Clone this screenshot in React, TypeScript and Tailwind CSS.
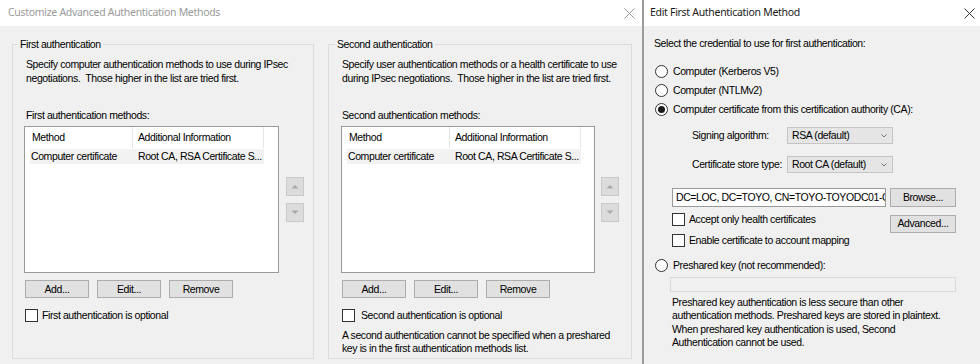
import React from "react";

const T = "font-['Liberation_Sans',Arial,sans-serif] text-[10.5px] tracking-[-0.4px] text-black";

function CloseX({ color }: { color: string }) {
  return (
    <svg width="11" height="11" viewBox="0 0 11 11" className="block">
      <path d="M0.5 0.5 L10.5 10.5 M10.5 0.5 L0.5 10.5" stroke={color} strokeWidth="1" fill="none" />
    </svg>
  );
}

function Btn({ children, className = "" }: { children: React.ReactNode; className?: string }) {
  return (
    <div
      className={`flex h-[18px] w-[64px] items-center justify-center border border-[#adadad] bg-[#e1e1e1] leading-none ${className}`}
    >
      {children}
    </div>
  );
}

function Check({ label, gap = "gap-[5px]" }: { label: string; gap?: string }) {
  return (
    <div className={`flex h-[15px] items-center ${gap}`}>
      <div className="h-[13px] w-[13px] border border-[#333333] bg-white" />
      <span className="leading-none">{label}</span>
    </div>
  );
}

function Radio({ label, checked = false }: { label: string; checked?: boolean }) {
  return (
    <div className="flex h-[19px] items-center gap-[5px]">
      <div className="flex h-[13px] w-[13px] items-center justify-center rounded-full border border-[#333333] bg-white">
        {checked && <div className="h-[7px] w-[7px] rounded-full bg-[#1a1a1a]" />}
      </div>
      <span className="leading-none">{label}</span>
    </div>
  );
}

function ArrowBtn({ up }: { up: boolean }) {
  return (
    <div className="flex h-[19px] w-[18px] items-center justify-center border border-[#c9c9c9] bg-[#dcdcdc]">
      <svg width="8" height="5" viewBox="0 0 8 5">
        {up ? <path d="M0.5 4.5 L4 1 L7.5 4.5 Z" fill="#a9a9a9" /> : <path d="M0.5 0.5 L4 4 L7.5 0.5 Z" fill="#a9a9a9" />}
      </svg>
    </div>
  );
}

function MethodList({ w }: { w: string }) {
  return (
    <div className={`h-[147px] ${w} border border-[#9a9a9a] bg-white pl-[5px]`}>
      <div className="flex h-[21px] w-[234px] items-center">
        <div className="flex h-full w-[103px] items-center border-r border-[#e5e5e5] pl-[2px]">Method</div>
        <div className="flex h-full w-[131px] items-center border-r border-[#e5e5e5] pl-[5px]">Additional Information</div>
      </div>
      <div className="mt-[1px] flex h-[15px] w-[234px] items-center bg-[#f2f2f2]">
        <div className="w-[103px] pl-[1px]">Computer certificate</div>
        <div className="w-[131px] pl-[5px]">Root CA, RSA Certificate S...</div>
      </div>
    </div>
  );
}

function Group({
  title,
  width,
  legendMl,
  contentPl,
  descPl,
  desc,
  listLabel,
  listW,
  arrowMl,
  checkLabel,
  checkGap,
  extra,
}: {
  title: string;
  width: string;
  legendMl: string;
  contentPl: string;
  descPl: string;
  desc: React.ReactNode;
  listLabel: string;
  listW: string;
  arrowMl: string;
  checkLabel: string;
  checkGap: string;
  extra?: React.ReactNode;
}) {
  return (
    <fieldset className={`h-[321px] ${width} border border-[#dcdcdc] p-0`}>
      <legend className={`${legendMl} px-[2px] leading-[13px]`}>{title}</legend>
      <div className={`flex flex-col ${contentPl}`}>
        <div className={`mt-[6px] whitespace-pre leading-[14px] ${descPl}`}>{desc}</div>
        <div className={`mt-[23px] leading-[14px] ${descPl}`}>{listLabel}</div>
        <div className="mt-[4px] flex">
          <MethodList w={listW} />
          <div className={`flex flex-col gap-[7px] pt-[51px] ${arrowMl}`}>
            <ArrowBtn up />
            <ArrowBtn up={false} />
          </div>
        </div>
        <div className="ml-[1px] mt-[7px] flex gap-[8px]">
          <Btn>Add...</Btn>
          <Btn>Edit...</Btn>
          <Btn>Remove</Btn>
        </div>
        <div className="ml-[1px] mt-[10px]">
          <Check label={checkLabel} gap={checkGap} />
        </div>
        {extra}
      </div>
    </fieldset>
  );
}

export default function App() {
  return (
    <div className={`flex h-[364px] w-[980px] overflow-hidden bg-[#f0f0f0] ${T}`}>
      {/* Left dialog */}
      <div className="flex w-[642px] flex-col">
        <div className="flex h-[26px] items-center justify-between bg-white pl-[8px] pr-[7px]">
          <span className="font-['Noto_Sans',sans-serif] text-[10.5px] tracking-[-0.3px] text-[#9a9a9a]">
            Customize Advanced Authentication Methods
          </span>
          <CloseX color="#9a9a9a" />
        </div>
        <div className="flex flex-1 gap-[14px] pl-[12px] pt-[12px]">
          <Group
            title="First authentication"
            width="w-[302px]"
            legendMl="ml-[5px]"
            contentPl="pl-[11px]"
            descPl="pl-[2px]"
            desc={"Specify computer authentication methods to use during IPsec\nnegotiations.  Those higher in the list are tried first."}
            listLabel="First authentication methods:"
            listW="w-[255px]"
            arrowMl="ml-[7px]"
            checkLabel="First authentication is optional"
            checkGap="gap-[4px]"
          />
          <Group
            title="Second authentication"
            width="w-[304px]"
            legendMl="ml-[6px]"
            contentPl="pl-[12px]"
            descPl="pl-[1px]"
            desc={"Specify user authentication methods or a health certificate to use\nduring IPsec negotiations.  Those higher in the list are tried first."}
            listLabel="Second authentication methods:"
            listW="w-[254px]"
            arrowMl="ml-[6px]"
            checkLabel="Second authentication is optional"
            checkGap="gap-[6px]"
            extra={
              <div className="ml-[1px] mt-[6px] leading-[13px]">
                A second authentication cannot be specified when a preshared
                <br />
                key is in the first authentication methods list.
              </div>
            }
          />
        </div>
      </div>

      {/* Divider */}
      <div className="w-[2px] bg-[#9b9b9b]" />

      {/* Right dialog */}
      <div className="flex flex-1 flex-col">
        <div className="flex h-[26px] items-center justify-between bg-white pl-[6px] pr-[5px]">
          <span className="font-['Noto_Sans',sans-serif] text-[10.5px] tracking-[-0.3px] text-[#1a1a1a]">
            Edit First Authentication Method
          </span>
          <CloseX color="#333333" />
        </div>
        <div className="flex flex-col pl-[10px] pt-[10px]">
          <div className="leading-[14px]">Select the credential to use for first authentication:</div>
          <div className="mt-[12px] flex flex-col pl-[1px]">
            <Radio label="Computer (Kerberos V5)" />
            <Radio label="Computer (NTLMv2)" />
            <Radio label="Computer certificate from this certification authority (CA):" checked />
          </div>

          <div className="mt-[8px] flex h-[17px] items-center pl-[38px]">
            <span className="w-[95px]">Signing algorithm:</span>
            <div className="flex h-[17px] w-[106px] items-center justify-between border border-[#c5c5c5] bg-[#e5e5e5] pl-[4px] pr-[5px]">
              <span>RSA (default)</span>
              <svg width="6" height="4" viewBox="0 0 6 4">
                <path d="M0.5 0.5 L3 3 L5.5 0.5" stroke="#777777" strokeWidth="1" fill="none" />
              </svg>
            </div>
          </div>

          <div className="mt-[12px] flex h-[17px] items-center pl-[38px]">
            <span className="w-[95px]">Certificate store type:</span>
            <div className="flex h-[17px] w-[106px] items-center justify-between border border-[#c5c5c5] bg-[#e5e5e5] pl-[4px] pr-[5px]">
              <span>Root CA (default)</span>
              <svg width="6" height="4" viewBox="0 0 6 4">
                <path d="M0.5 0.5 L3 3 L5.5 0.5" stroke="#777777" strokeWidth="1" fill="none" />
              </svg>
            </div>
          </div>

          <div className="mt-[15px] flex items-center gap-[4px] pl-[18px]">
            <div className="flex h-[19px] w-[214px] items-center overflow-hidden whitespace-nowrap border border-[#9a9a9a] bg-white pl-[3px]">
              DC=LOC, DC=TOYO, CN=TOYO-TOYODC01-CA
            </div>
            <div className="flex h-[19px] w-[66px] items-center justify-center border border-[#adadad] bg-[#e1e1e1]">
              Browse...
            </div>
          </div>

          <div className="mt-[5px] flex pl-[18px]">
            <div className="flex w-[218px] flex-col gap-[6px]">
              <Check label="Accept only health certificates" gap="gap-[4px]" />
              <Check label="Enable certificate to account mapping" gap="gap-[4px]" />
            </div>
            <div className="mt-[3px] flex h-[18px] w-[66px] items-center justify-center border border-[#adadad] bg-[#e1e1e1]">
              Advanced...
            </div>
          </div>

          <div className="mt-[8px] pl-[1px]">
            <Radio label="Preshared key (not recommended):" />
          </div>

          <div className="ml-[16px] mt-[2px] h-[15px] w-[286px] border border-[#d9d9d9] bg-[#f0f0f0]" />

          <div className="ml-[18px] mt-[4px] whitespace-nowrap leading-[13.3px]">
            Preshared key authentication is less secure than other
            <br />
            authentication methods. Preshared keys are stored in plaintext.
            <br />
            When preshared key authentication is used, Second
            <br />
            Authentication cannot be used.
          </div>
        </div>
      </div>
    </div>
  );
}
